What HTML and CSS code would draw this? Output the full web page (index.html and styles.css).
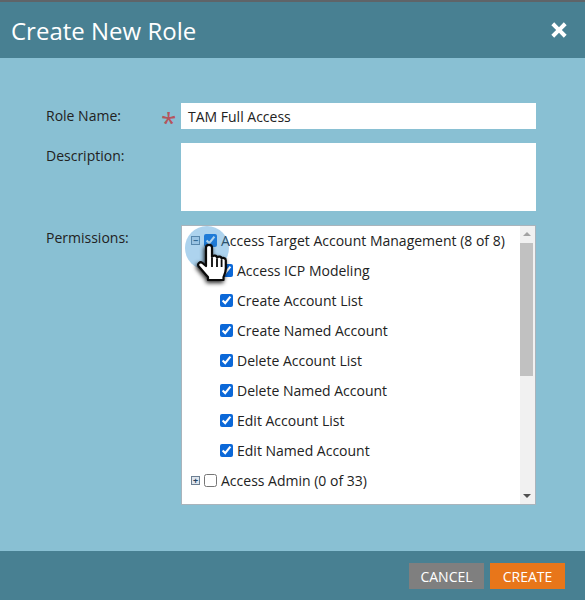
FILE: index.html
```html
<!DOCTYPE html>
<html lang="en">
<head>
  <meta charset="UTF-8" />
  <title>Create New Role</title>
  <link rel="stylesheet" href="styles.css">
</head>
<body>
  <div class="dialog">
    <header class="dialog-head">
      <h1>Create New Role</h1>
      <svg class="close" viewBox="0 0 14 14" width="16" height="16"><path d="M2.800 0.300 7 4.500 11.200 0.300 13.700 2.800 9.500 7 13.700 11.200 11.200 13.700 7 9.500 2.800 13.700 0.300 11.200 4.500 7 0.300 2.800Z" fill="#fff"/></svg>
    </header>

    <main class="dialog-body">
      <div class="field">
        <label class="field-label">Role Name:</label>
        <span class="required">*</span>
        <div class="input">TAM Full Access</div>
      </div>
      <div class="field">
        <label class="field-label">Description:</label>
        <div class="input textarea"></div>
      </div>
      <div class="field">
        <label class="field-label">Permissions:</label>
        <div class="tree">
          <ul class="tree-list">
            <li class="row">
              <span class="toggle">&minus;</span>
              <input type="checkbox" checked>
              <span>Access Target Account Management (8 of 8)</span>
            </li>
            <li class="row child"><input type="checkbox" checked><span>Access ICP Modeling</span></li>
            <li class="row child"><input type="checkbox" checked><span>Create Account List</span></li>
            <li class="row child"><input type="checkbox" checked><span>Create Named Account</span></li>
            <li class="row child"><input type="checkbox" checked><span>Delete Account List</span></li>
            <li class="row child"><input type="checkbox" checked><span>Delete Named Account</span></li>
            <li class="row child"><input type="checkbox" checked><span>Edit Account List</span></li>
            <li class="row child"><input type="checkbox" checked><span>Edit Named Account</span></li>
            <li class="row">
              <span class="toggle">+</span>
              <input type="checkbox">
              <span>Access Admin (0 of 33)</span>
            </li>
          </ul>
          <div class="scrollbar">
            <span class="arrow up"></span>
            <span class="thumb"></span>
            <span class="arrow down"></span>
          </div>

          <!-- click highlight and hand pointer -->
          <span class="click-spot"></span>
          <svg class="hand" viewBox="0 0 30 38" width="30" height="40">
            <path d="M9 3.500c0-3.600 6-3.600 6 0V13c.6-2 5-1.800 5 .8 .6-1.800 4.600-1.600 4.600 1 .8-1.400 4.200-1 4.200 1.400v8.300c0 3.500-1 5.500-2.300 8.500v3H11v-3C8 30 5.500 26.500 1.800 22.500c-2-2.500 1.200-5.500 3.700-3.500L9 22Z" fill="#fff" stroke="#0a0a0a" stroke-width="2.200" stroke-linejoin="round"/>
            <path d="M15 14v9M20 15v8M24.600 16v7" stroke="#0a0a0a" stroke-width="1.800" fill="none"/>
          </svg>
        </div>
      </div>
    </main>

    <footer class="dialog-foot">
      <button class="btn btn-cancel">CANCEL</button>
      <button class="btn btn-create">CREATE</button>
    </footer>
  </div>
</body>
</html>
```

FILE: styles.css
```css
* {
  box-sizing: border-box;
}
body {
  margin: 0;
  font-family: "Open Sans", sans-serif;
  font-size: 14px;
  color: #222;
}
.dialog {
  width: 585px;
  height: 600px;
  display: flex;
  flex-direction: column;
  background: #89c0d3;
}
.dialog-head {
  height: 58px;
  flex: none;
  display: flex;
  align-items: center;
  justify-content: space-between;
  padding: 0 18px 0 11px;
  background: #488092;
  border-top: 2px solid #5f6468;
}
.dialog-head h1 {
  margin: 0;
  font-size: 24px;
  font-weight: 400;
  color: #fff;
}
.dialog-body {
  flex: 1;
  display: flex;
  flex-direction: column;
  gap: 14px;
  padding: 45px 49px 0 46px;
}
.field {
  position: relative;
  display: flex;
  align-items: flex-start;
  padding-left: 135px;
}
.field-label {
  position: absolute;
  left: 0;
  top: 3px;
}
.required {
  position: absolute;
  left: 115px;
  top: 3px;
  font-size: 28px;
  line-height: 32px;
  color: #b5545c;
}
.input {
  width: 355px;
  height: 26px;
  padding: 0 7px;
  line-height: 27px;
  background: #fff;
}
.textarea {
  height: 68px;
}
.tree {
  position: relative;
  width: 355px;
  height: 280px;
  display: flex;
  background: #fff;
  border: 1px solid #a9b4bc;
}
.tree-list {
  flex: 1;
  margin: -1px 0 0;
  padding: 0;
  list-style: none;
}
.row {
  height: 30px;
  display: flex;
  align-items: center;
  padding-left: 22px;
}
.row input {
  width: 13px;
  height: 13px;
  margin: 0 4px 0 0;
  accent-color: #0b68d8;
}
.row.child {
  padding-left: 38px;
}
.toggle {
  width: 9px;
  height: 9px;
  margin-left: -13px;
  margin-right: 4px;
  border: 1px solid #6d7f92;
  background: #dfe6ee;
  color: #26425e;
  font-size: 9px;
  font-weight: 700;
  line-height: 7px;
  text-align: center;
}
.scrollbar {
  position: relative;
  width: 15px;
  flex: none;
  display: flex;
  flex-direction: column;
  background: #f1f1f1;
}
.arrow {
  height: 17px;
  flex: none;
  position: relative;
}
.arrow::after {
  content: "";
  position: absolute;
  left: 3px;
  border-left: 4px solid transparent;
  border-right: 4px solid transparent;
}
.arrow.up::after {
  top: 6px;
  border-bottom: 4px solid #a3a3a3;
}
.arrow.down {
  margin-top: auto;
}
.arrow.down::after {
  top: 7px;
  border-top: 4px solid #505050;
}
.thumb {
  height: 133px;
  width: 13px;
  background: #c1c1c1;
}
.click-spot {
  position: absolute;
  left: 3px;
  top: 0;
  width: 44px;
  height: 44px;
  border-radius: 50%;
  background: rgba(60, 150, 215, 0.42);
}
.hand {
  position: absolute;
  left: 15px;
  top: 17px;
  filter: drop-shadow(-1px 2px 2px rgba(0, 0, 0, 0.85));
}
.dialog-foot {
  height: 49px;
  flex: none;
  display: flex;
  justify-content: flex-end;
  align-items: flex-start;
  gap: 6px;
  padding: 12px 20px 0 0;
  background: #488092;
}
.btn {
  width: 75px;
  height: 26px;
  border: none;
  padding: 0;
  font-family: "Open Sans", sans-serif;
  font-size: 14px;
  color: #fff;
}
.btn-cancel {
  background: #7f7f7f;
}
.btn-create {
  background: #e8761a;
}
```
